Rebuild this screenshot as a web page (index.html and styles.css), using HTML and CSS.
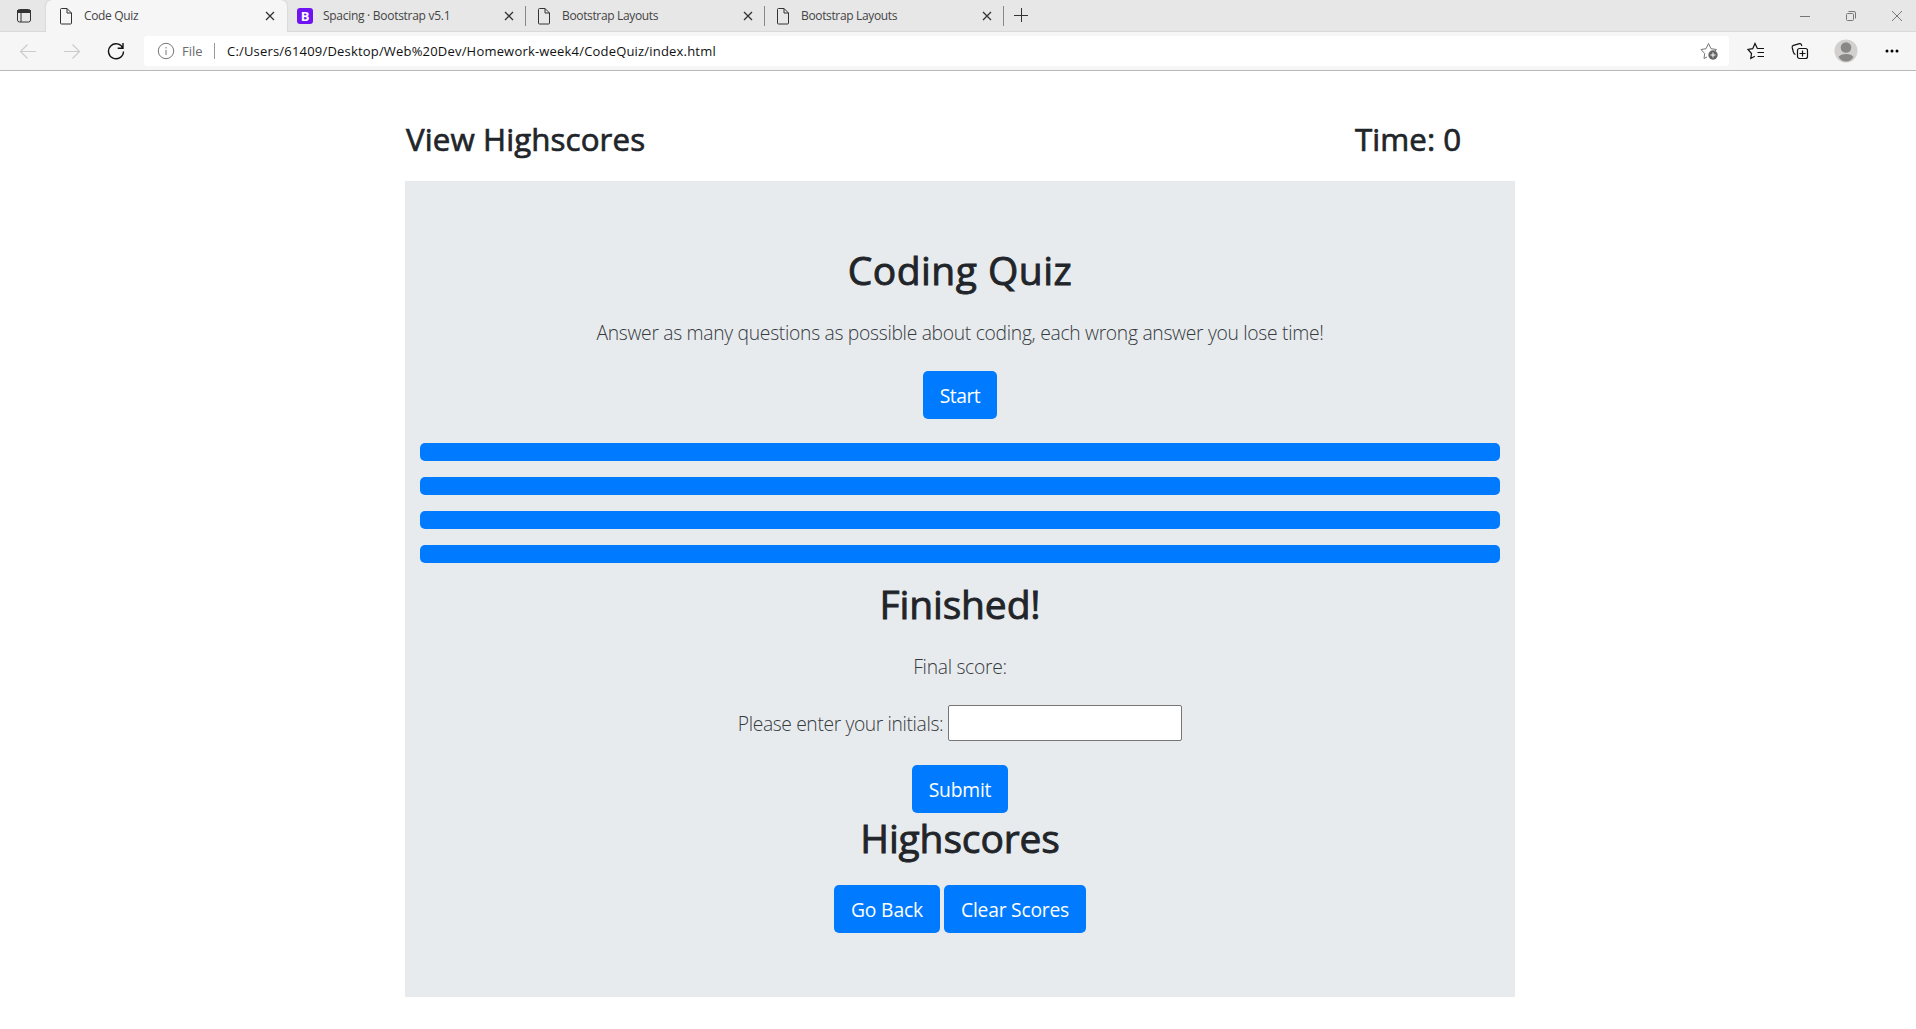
FILE: index.html
```html
<!DOCTYPE html>
<html lang="en">
<head>
<meta charset="utf-8">
<title>Code Quiz</title>
<link rel="stylesheet" href="styles.css">
</head>
<body>
<header class="browser">
  <div class="tabstrip">
    <svg class="tab-actions" viewBox="0 0 16 16" width="16" height="16"><rect x="1.5" y="1.5" width="13" height="12.500" rx="2" fill="none" stroke="#333"/><path d="M1.500 2.500h13v2h-13zM5 4v10" stroke="#333" fill="#333"/></svg>
    <div class="tab tab-active">
      <svg class="page-icon" viewBox="0 0 14 17" width="14" height="17"><path d="M2.500.5h5.500l4.500 4.500v10q0 1-1 1h-9q-1 0-1-1v-13.500q0-1 1-1zM8 .5v4.500h4.500"/></svg>
      <span class="tab-title">Code Quiz</span>
      <svg class="close" viewBox="0 0 10 10" width="10" height="10"><path d="M1 1l8 8M9 1l-8 8"/></svg>
    </div>
    <div class="tab tab-bootstrap">
      <span class="bootstrap-icon">B</span>
      <span class="tab-title">Spacing · Bootstrap v5.1</span>
      <svg class="close" viewBox="0 0 10 10" width="10" height="10"><path d="M1 1l8 8M9 1l-8 8"/></svg>
    </div>
    <div class="tab">
      <svg class="page-icon" viewBox="0 0 14 17" width="14" height="17"><path d="M2.500.5h5.500l4.500 4.500v10q0 1-1 1h-9q-1 0-1-1v-13.500q0-1 1-1zM8 .5v4.500h4.500"/></svg>
      <span class="tab-title">Bootstrap Layouts</span>
      <svg class="close" viewBox="0 0 10 10" width="10" height="10"><path d="M1 1l8 8M9 1l-8 8"/></svg>
    </div>
    <div class="tab">
      <svg class="page-icon" viewBox="0 0 14 17" width="14" height="17"><path d="M2.500.5h5.500l4.500 4.500v10q0 1-1 1h-9q-1 0-1-1v-13.500q0-1 1-1zM8 .5v4.500h4.500"/></svg>
      <span class="tab-title">Bootstrap Layouts</span>
      <svg class="close" viewBox="0 0 10 10" width="10" height="10"><path d="M1 1l8 8M9 1l-8 8"/></svg>
    </div>
    <svg class="new-tab" viewBox="0 0 14 14" width="14" height="14"><path d="M0 7.500h14M7.500 0v14" stroke="#333" fill="none"/></svg>
    <div class="window-controls">
      <svg viewBox="0 0 12 12" width="12" height="12"><path d="M1 6.500h10"/></svg>
      <svg viewBox="0 0 12 12" width="12" height="12"><rect x="1.500" y="3.500" width="7" height="7" rx="1"/><path d="M3.500 1.500h5.500q1.500 0 1.500 1.500v5.500"/></svg>
      <svg viewBox="0 0 12 12" width="12" height="12"><path d="M1 1l10 10M11 1l-10 10"/></svg>
    </div>
  </div>
  <div class="toolbar">
    <div class="nav">
      <svg class="nav-off" viewBox="0 0 18 18" width="18" height="18"><path d="M17 9.500H1.500M8.500 2.500l-7 7 7 7"/></svg>
      <svg class="nav-off" viewBox="0 0 18 18" width="18" height="18"><path d="M1 9.500h15.500M9.500 2.500l7 7-7 7"/></svg>
      <svg class="reload" viewBox="0 0 18 18" width="18" height="18"><path d="M15.900 6.300A7.500 7.500 0 1 0 16.500 9.500M16 1v5.300h-5.300"/></svg>
    </div>
    <div class="address">
      <svg class="info" viewBox="0 0 18 18" width="18" height="18"><circle cx="9" cy="9" r="7.700"/><path d="M9 8v5M9 5v1.500"/></svg>
      <span class="scheme">File</span>
      <span class="divider"></span>
      <span class="url">C:/Users/61409/Desktop/Web%20Dev/Homework-week4/CodeQuiz/index.html</span>
      <svg class="star-add" viewBox="0 0 18 18" width="18" height="18"><path d="M7 15l-3 1.500.7-5L1 7.500l5-.8L8.500 1.500l2.500 5.200 5.500.8-2 2" fill="none" stroke="#777"/><circle cx="13" cy="13" r="4.700" fill="#666"/><path d="M10.500 13h5M13 10.500v5" stroke="#fff"/></svg>
    </div>
    <div class="tools">
      <svg viewBox="0 0 18 18" width="18" height="18"><path d="M10.500 6.700l-2.500-5.200-2.300 5.200-4.700.8 3.500 4-.7 5 4-2.200M10.500 6.500h6.500M10.500 10.500h6.500M10.500 14.500h6.500"/></svg>
      <svg viewBox="0 0 18 18" width="18" height="18"><rect x="6.500" y="6.500" width="10" height="10" rx="2"/><path d="M11.500 8.500v6M8.500 11.500h6M4.500 12.500q-1.500-.5-2-2l-1.300-5q-.4-1.700 1.300-2.200l6-1.600q1.500-.4 2 1.200l.3 1.100"/></svg>
      <svg class="avatar" viewBox="0 0 24 24" width="24" height="24"><circle cx="12" cy="12" r="11.500" fill="#d2d0ce"/><circle cx="12" cy="8.500" r="5.300" fill="#8a8886"/><path d="M4.500 18q2-3 7.500-3t7.500 3q-3 4.500-7.500 4.500t-7.500-4.500z" fill="#8a8886"/></svg>
      <svg class="more" viewBox="0 0 14 4" width="14" height="4"><circle cx="2" cy="2" r="1.500"/><circle cx="7" cy="2" r="1.500"/><circle cx="12" cy="2" r="1.500"/></svg>
    </div>
  </div>
</header>

<main class="container">
  <div class="topbar">
    <h2 class="view-scores">View Highscores</h2>
    <h2 class="timer">Time: 0</h2>
  </div>
  <section class="jumbotron">
    <h1 class="title">Coding Quiz</h1>
    <p class="lead intro">Answer as many questions as possible about coding, each wrong answer you lose time!</p>
    <div class="actions"><button class="btn btn-start">Start</button></div>
    <div class="answers">
      <button class="answer" aria-label="Answer 1"></button>
      <button class="answer" aria-label="Answer 2"></button>
      <button class="answer" aria-label="Answer 3"></button>
      <button class="answer" aria-label="Answer 4"></button>
    </div>
    <h1>Finished!</h1>
    <p class="lead">Final score:</p>
    <div class="lead initials"><label for="initials">Please enter your initials:</label><input id="initials" type="text"></div>
    <div class="actions"><button class="btn btn-submit">Submit</button></div>
    <h1>Highscores</h1>
    <div class="actions"><button class="btn btn-back">Go Back</button><button class="btn btn-clear">Clear Scores</button></div>
  </section>
</main>
</body>
</html>
```
FILE: styles.css
```css
* { box-sizing: border-box; }
body {
  margin: 0;
  height: 1029px;
  overflow: hidden;
  background: #fff;
  color: #212529;
  font-family: "Open Sans", "Noto Sans", sans-serif;
}
svg { display: block; flex: none; }

/* Browser frame */
.browser { height: 71px; background: #f6f6f6; border-bottom: 1px solid #b9b9b9; }
.tabstrip { display: flex; height: 32px; background: #e7e7e7; border-bottom: 1px solid #d9d9d9; }
.tab-actions { margin: 8px 14px 0 16px; width: 16px; }
.tab {
  display: flex;
  align-items: center;
  width: 239px;
  height: 32px;
  padding: 0 12px 0 11px;
  background: linear-gradient(#888, #888) right 6px / 1px 20px no-repeat;
  font-size: 12px;
  letter-spacing: -0.35px;
  color: #444;
}
.tab-active { width: 241px; padding-left: 13px; background: #f6f6f6; border-radius: 6px 6px 0 0; box-shadow: 0 0 2px #bbb; clip-path: inset(0 -3px 0 -3px); }
.tab-bootstrap { padding-left: 10px; }
.tab-bootstrap .tab-title { margin-left: 10px; letter-spacing: -0.28px; }
.tab-title { flex: 1; margin-left: 11px; padding-bottom: 1px; white-space: nowrap; }
.page-icon path { fill: none; stroke: #333; }
.close path { fill: none; stroke: #333; stroke-width: 1.3; }
.bootstrap-icon { width: 16px; height: 16px; border-radius: 3px; background: #7013f2; color: #fff; font-size: 13px; font-weight: 700; line-height: 16px; text-align: center; }
.new-tab { margin: 8px 0 0 10px; }
.window-controls { display: flex; gap: 34px; margin: 10px 13px 0 auto; }
.window-controls path, .window-controls rect { fill: none; stroke: #777; }
.toolbar { display: flex; align-items: center; height: 38px; padding-right: 17px; }
.nav { display: flex; gap: 26px; width: 144px; padding-left: 19px; }
.nav path { fill: none; stroke: #ccc; stroke-width: 1.2; }
.nav .reload path { stroke: #111; stroke-width: 1.4; }
.address { display: flex; align-items: center; width: 1585px; height: 30px; padding: 0 11px 0 13px; border-radius: 3px; background: #fff; font-size: 13px; }
.info circle, .info path { fill: none; stroke: #767676; }
.scheme { margin-left: 7px; width: 32px; color: #6b6b6b; }
.divider { width: 1px; height: 16px; background: #999; }
.url { flex: 1; margin-left: 12px; color: #111; letter-spacing: 0.19px; white-space: nowrap; }
.tools { display: flex; flex: 1; align-items: center; justify-content: space-between; padding-left: 18px; }
.tools svg:not(.avatar):not(.more) * { fill: none; stroke: #111; stroke-width: 1.2; }
.tools .avatar { margin-left: -1px; margin-right: 1px; }

/* Quiz page */
.container { width: 1110px; margin: 0 auto 0 405px; }
.topbar { display: flex; height: 110px; padding-top: 49px; }
.topbar h2 { margin: 0; font-size: 31.3px; font-weight: 400; -webkit-text-stroke: 0.7px; letter-spacing: 0.05px; line-height: 38px; white-space: nowrap; }
.topbar .view-scores { width: 950px; padding-left: 1px; letter-spacing: 0.1px; }
.jumbotron { height: 816px; padding: 64px 15px; background: #e8ebee; text-align: center; }
h1 { height: 48px; margin: 0 0 24px; padding-top: 2px; font-size: 39px; font-weight: 400; -webkit-text-stroke: 0.9px; letter-spacing: -0.14px; line-height: 46px; }
.title { letter-spacing: 0.46px; }
.lead { height: 30px; margin: 0 0 24px; padding-top: 1px; color: #363b40; font-size: 19.3px; font-weight: 300; letter-spacing: -0.3px; line-height: 30px; }
.actions { display: flex; justify-content: center; gap: 4px; }
.btn { height: 48px; padding: 1px 0 0; border: 0; border-radius: 5px; background: #007bff; color: #fff; font: inherit; font-size: 19.3px; line-height: 30px; white-space: nowrap; }
.btn-start { width: 74px; letter-spacing: -0.5px; }
.btn-submit { width: 96px; letter-spacing: -0.2px; }
.btn-back { width: 106px; letter-spacing: -0.15px; }
.btn-clear { width: 142px; letter-spacing: -0.24px; }
.answers { display: grid; gap: 16px; margin: 24px 0 16px; }
.answer { height: 18px; padding: 0; border: 0; border-radius: 5px; background: #007bff; }
.initials { display: flex; justify-content: center; align-items: center; height: 36px; padding: 0; gap: 5px; }
.initials label { padding-top: 2px; letter-spacing: -0.38px; }
.initials input { width: 234px; height: 36px; margin: 0; border: 1px solid #767676; border-radius: 2px; background: #fff; }
```
